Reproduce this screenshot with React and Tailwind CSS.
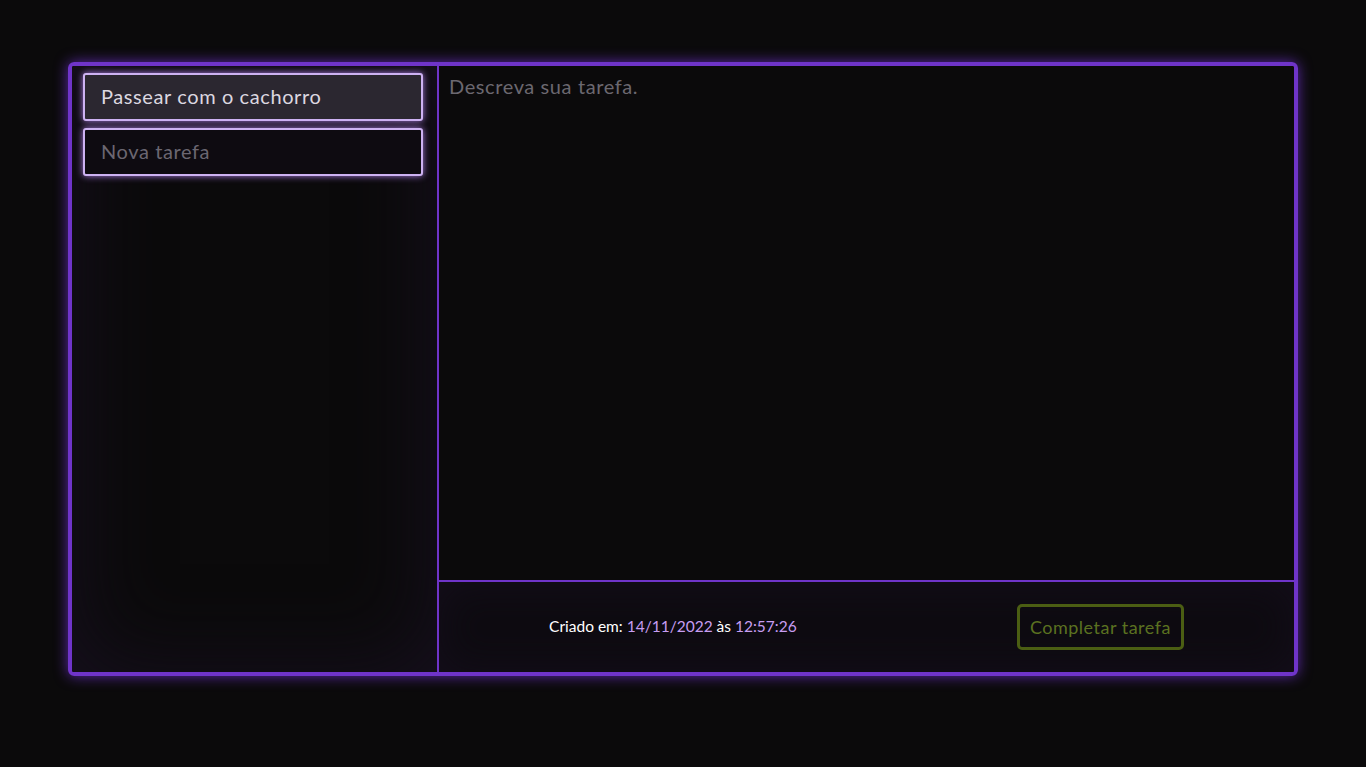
import React from 'react';

const font = { fontFamily: 'Lato, "Open Sans", sans-serif' };

function TaskItem({ label, active }) {
  return (
    <div
      className={
        'flex h-[48px] w-[340px] items-center rounded-[3px] border-2 border-[#cdb2f2] pl-[16px] pb-[2px] text-[20px] tracking-[0.6px] shadow-[0_0_7px_#a77be0] ' +
        (active ? 'bg-[#2b2730] text-[#dcd8e0]' : 'bg-[#0e0b11] text-[#6b6771]')
      }
    >
      {label}
    </div>
  );
}

export default function App() {
  return (
    <div className="min-h-screen bg-[#0b0a0b] pt-[62px] pl-[68px]" style={font}>
      <div className="flex h-[614px] w-[1230px] overflow-hidden rounded-[6px] border-4 border-[#6f34c9] shadow-[0_0_14px_#5b2aa8]">
        <aside className="flex w-[367px] shrink-0 flex-col gap-[7px] border-r-2 border-[#6f34c9] bg-[#0b0a0b] pt-[7px] pl-[11px] shadow-[inset_0_0_90px_#17101f]">
          <TaskItem label="Passear com o cachorro" active />
          <TaskItem label="Nova tarefa" />
        </aside>
        <main className="flex flex-1 flex-col">
          <textarea
            className="flex-1 resize-none bg-[#0b0a0b] px-[10px] pt-[5px] text-[20px] tracking-[0.6px] text-[#d8d4dc] outline-none placeholder:text-[#6b6870]"
            placeholder="Descreva sua tarefa."
            style={font}
          />
          <footer className="flex h-[92px] items-center justify-around border-t-2 border-[#6f34c9] bg-[#0e0b11] shadow-[inset_0_0_40px_#140e1b]">
            <p className="text-[15.5px] text-white">
              Criado em: <span className="text-[#c79df2]">14/11/2022</span> às{' '}
              <span className="text-[#c79df2]">12:57:26</span>
            </p>
            <button
              type="button"
              className="h-[46px] rounded-[5px] border-[3px] border-[#4b5e13] px-[10px] text-[18px] tracking-[0.5px] text-[#5b7120]"
            >
              Completar tarefa
            </button>
          </footer>
        </main>
      </div>
    </div>
  );
}
